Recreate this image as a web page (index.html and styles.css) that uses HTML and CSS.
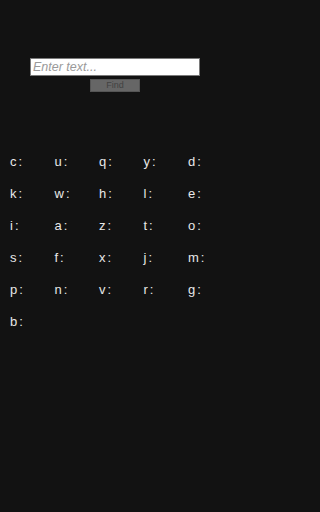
FILE: index.html
```html
<!DOCTYPE html>
<html>
<head>
<meta charset="utf-8">
<link rel="stylesheet" href="styles.css">
</head>
<body>
<div class="page">
  <div class="search">
    <input class="field" type="text" placeholder="Enter text...">
    <button class="find">Find</button>
  </div>
  <div class="grid">
    <div class="cell">c:</div><div class="cell">u:</div><div class="cell">q:</div><div class="cell">y:</div><div class="cell">d:</div>
    <div class="cell">k:</div><div class="cell">w:</div><div class="cell">h:</div><div class="cell">l:</div><div class="cell">e:</div>
    <div class="cell">i:</div><div class="cell">a:</div><div class="cell">z:</div><div class="cell">t:</div><div class="cell">o:</div>
    <div class="cell">s:</div><div class="cell">f:</div><div class="cell">x:</div><div class="cell">j:</div><div class="cell">m:</div>
    <div class="cell">p:</div><div class="cell">n:</div><div class="cell">v:</div><div class="cell">r:</div><div class="cell">g:</div>
    <div class="cell">b:</div>
  </div>
</div>
</body>
</html>
```
FILE: styles.css
```css
html, body {
  margin: 0;
  padding: 0;
  background: #121212;
  min-height: 100%;
}
body {
  font-family: "Liberation Sans", Arial, sans-serif;
}
.page {
  width: 230px;
}
.search {
  padding-top: 58px;
  display: flex;
  flex-direction: column;
  align-items: center;
}
.field {
  box-sizing: border-box;
  width: 170px;
  height: 18px;
  margin: 0;
  padding: 0 2px;
  border: 1px solid #7a7a7a;
  background: #ffffff;
  font-family: "Liberation Sans", Arial, sans-serif;
  font-size: 12.5px;
  outline: none;
}
.field::placeholder {
  color: #9a9a9a;
  font-style: italic;
}
.find {
  box-sizing: border-box;
  width: 50px;
  height: 13px;
  margin-top: 3px;
  padding: 0;
  border: 1px solid #555555;
  background: #666666;
  color: #424242;
  font-family: "Liberation Sans", Arial, sans-serif;
  font-size: 9px;
  line-height: 11px;
}
.grid {
  margin-top: 54px;
  padding-left: 10px;
  display: grid;
  grid-template-columns: repeat(5, 44.5px);
  grid-auto-rows: 32px;
}
.cell {
  color: #e8e8e8;
  font-size: 13px;
  line-height: 32px;
  letter-spacing: 2px;
}
```
